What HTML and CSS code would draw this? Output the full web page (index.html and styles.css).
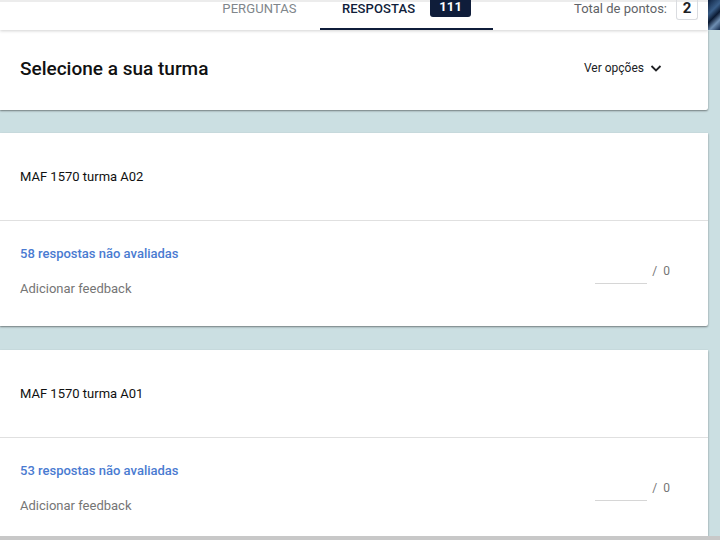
FILE: index.html
```html
<!DOCTYPE html>
<html lang="pt">
<head>
<meta charset="utf-8">
<title>Respostas</title>
<link rel="stylesheet" href="styles.css">
</head>
<body>
<div class="layout">
  <div class="main">
    <header class="header">
      <nav class="tabs">
        <div class="tab first">PERGUNTAS</div>
        <div class="tab active">RESPOSTAS <span class="badge">111</span></div>
      </nav>
      <div class="total">Total de pontos: <span class="points">2</span></div>
    </header>

    <section class="card head-card">
      <h1 class="title">Selecione a sua turma</h1>
      <button class="options">Ver opções
        <svg width="12" height="12" viewBox="0 0 12 12"><path d="M1.5 4 L6 8.5 L10.5 4" fill="none" stroke="#202124" stroke-width="1.8"/></svg>
      </button>
    </section>

    <section class="card group">
      <div class="group-name">MAF 1570 turma A02</div>
      <div class="group-body">
        <div class="group-info">
          <div class="pending">58 respostas não avaliadas</div>
          <div class="feedback">Adicionar feedback</div>
        </div>
        <div class="score"><span class="score-input"></span><span class="score-max">/&nbsp;&nbsp;0</span></div>
      </div>
    </section>

    <section class="card group">
      <div class="group-name">MAF 1570 turma A01</div>
      <div class="group-body">
        <div class="group-info">
          <div class="pending">53 respostas não avaliadas</div>
          <div class="feedback">Adicionar feedback</div>
        </div>
        <div class="score"><span class="score-input"></span><span class="score-max">/&nbsp;&nbsp;0</span></div>
      </div>
    </section>
  </div>
  <aside class="side"><div class="thumb"></div></aside>
</div>
<div class="bottom-bar"></div>
</body>
</html>
```

FILE: styles.css
```css
* { box-sizing: border-box; }
html, body { margin: 0; padding: 0; }
body {
  background: #cbdfe2;
  font-family: Roboto, "Liberation Sans", Arial, sans-serif;
  color: #202124;
  height: 540px;
  overflow: hidden;
}
.layout { display: flex; }
.main { width: 708px; display: flex; flex-direction: column; }
.side { width: 12px; }
.thumb {
  height: 30px;
  background: linear-gradient(135deg, #0d2140 0%, #3a5f8a 35%, #0b1a33 55%, #6f8fb3 75%, #12284a 100%);
}
.header {
  position: relative;
  z-index: 2;
  height: 30px;
  background: #fff;
  border-top: 2px solid #ececec;
  box-shadow: 0 1px 3px rgba(0,0,0,0.18);
  display: flex;
  align-items: flex-start;
}
.tabs { display: flex; margin-left: 199px; height: 100%; }
.tab {
  width: 173px;
  height: 28px;
  display: flex;
  justify-content: center;
  align-items: flex-start;
  font-size: 13px;
  line-height: 13px;
  color: #80868b;
  letter-spacing: 0.1px;
}
.tab.first { width: 121px; }
.tab.active {
  color: #0f1d3a;
  font-weight: 500;
  border-bottom: 2px solid #0f1d3a;
}
.badge {
  display: inline-block;
  margin-left: 15px;
  margin-top: -5px;
  width: 41px;
  height: 20px;
  background: #0f1d3a;
  color: #fff;
  border-radius: 0 0 3px 3px;
  text-align: center;
  font-size: 13px;
  font-weight: 700;
  line-height: 19px;
}
.total {
  margin-left: auto;
  margin-right: 10px;
  display: flex;
  align-items: flex-start;
  font-size: 13px;
  line-height: 13px;
  color: #5f6368;
}
.points {
  display: inline-block;
  margin-left: 9px;
  margin-top: -4px;
  width: 22px;
  height: 22px;
  border: 1px solid #dadce0;
  border-top: none;
  border-radius: 0 0 3px 3px;
  text-align: center;
  color: #202124;
  font-weight: 700;
  font-size: 15px;
  line-height: 20px;
}
.card {
  background: #fff;
  box-shadow: 0 1px 2px rgba(0,0,0,0.45);
  border-radius: 0 0 2px 0;
}
.head-card {
  height: 80px;
  display: flex;
  align-items: center;
  justify-content: space-between;
  padding: 0 46px 4px 20px;
}
.title {
  margin: 0;
  font-size: 19px;
  font-weight: 500;
  color: #111;
}
.options {
  border: none;
  background: none;
  padding: 0;
  font: inherit;
  font-size: 12px;
  color: #202124;
  display: flex;
  align-items: center;
  gap: 6px;
}
.group { margin-top: 23px; }
.group + .group { margin-top: 24px; }
.group-name {
  font-size: 13px;
  line-height: 16px;
  padding: 36px 20px 35px;
  border-bottom: 1px solid #e0e0e0;
  color: #111;
}
.group-body {
  display: flex;
  justify-content: space-between;
  align-items: flex-start;
  padding: 25px 38px 29px 20px;
}
.pending {
  font-size: 13px;
  line-height: 16px;
  font-weight: 500;
  color: #4a7bd1;
}
.feedback {
  margin-top: 19px;
  font-size: 13px;
  line-height: 16px;
  color: #757575;
}
.score { display: flex; align-items: flex-start; margin-top: 17px; }
.score-input {
  width: 52px;
  height: 21px;
  border-bottom: 1px solid #d6d6d6;
}
.score-max {
  margin-left: 5px;
  font-size: 12px;
  line-height: 16px;
  color: #757575;
}
.bottom-bar {
  position: fixed;
  left: 0;
  right: 0;
  bottom: 0;
  height: 4px;
  background: #c8c8c8;
}
```
